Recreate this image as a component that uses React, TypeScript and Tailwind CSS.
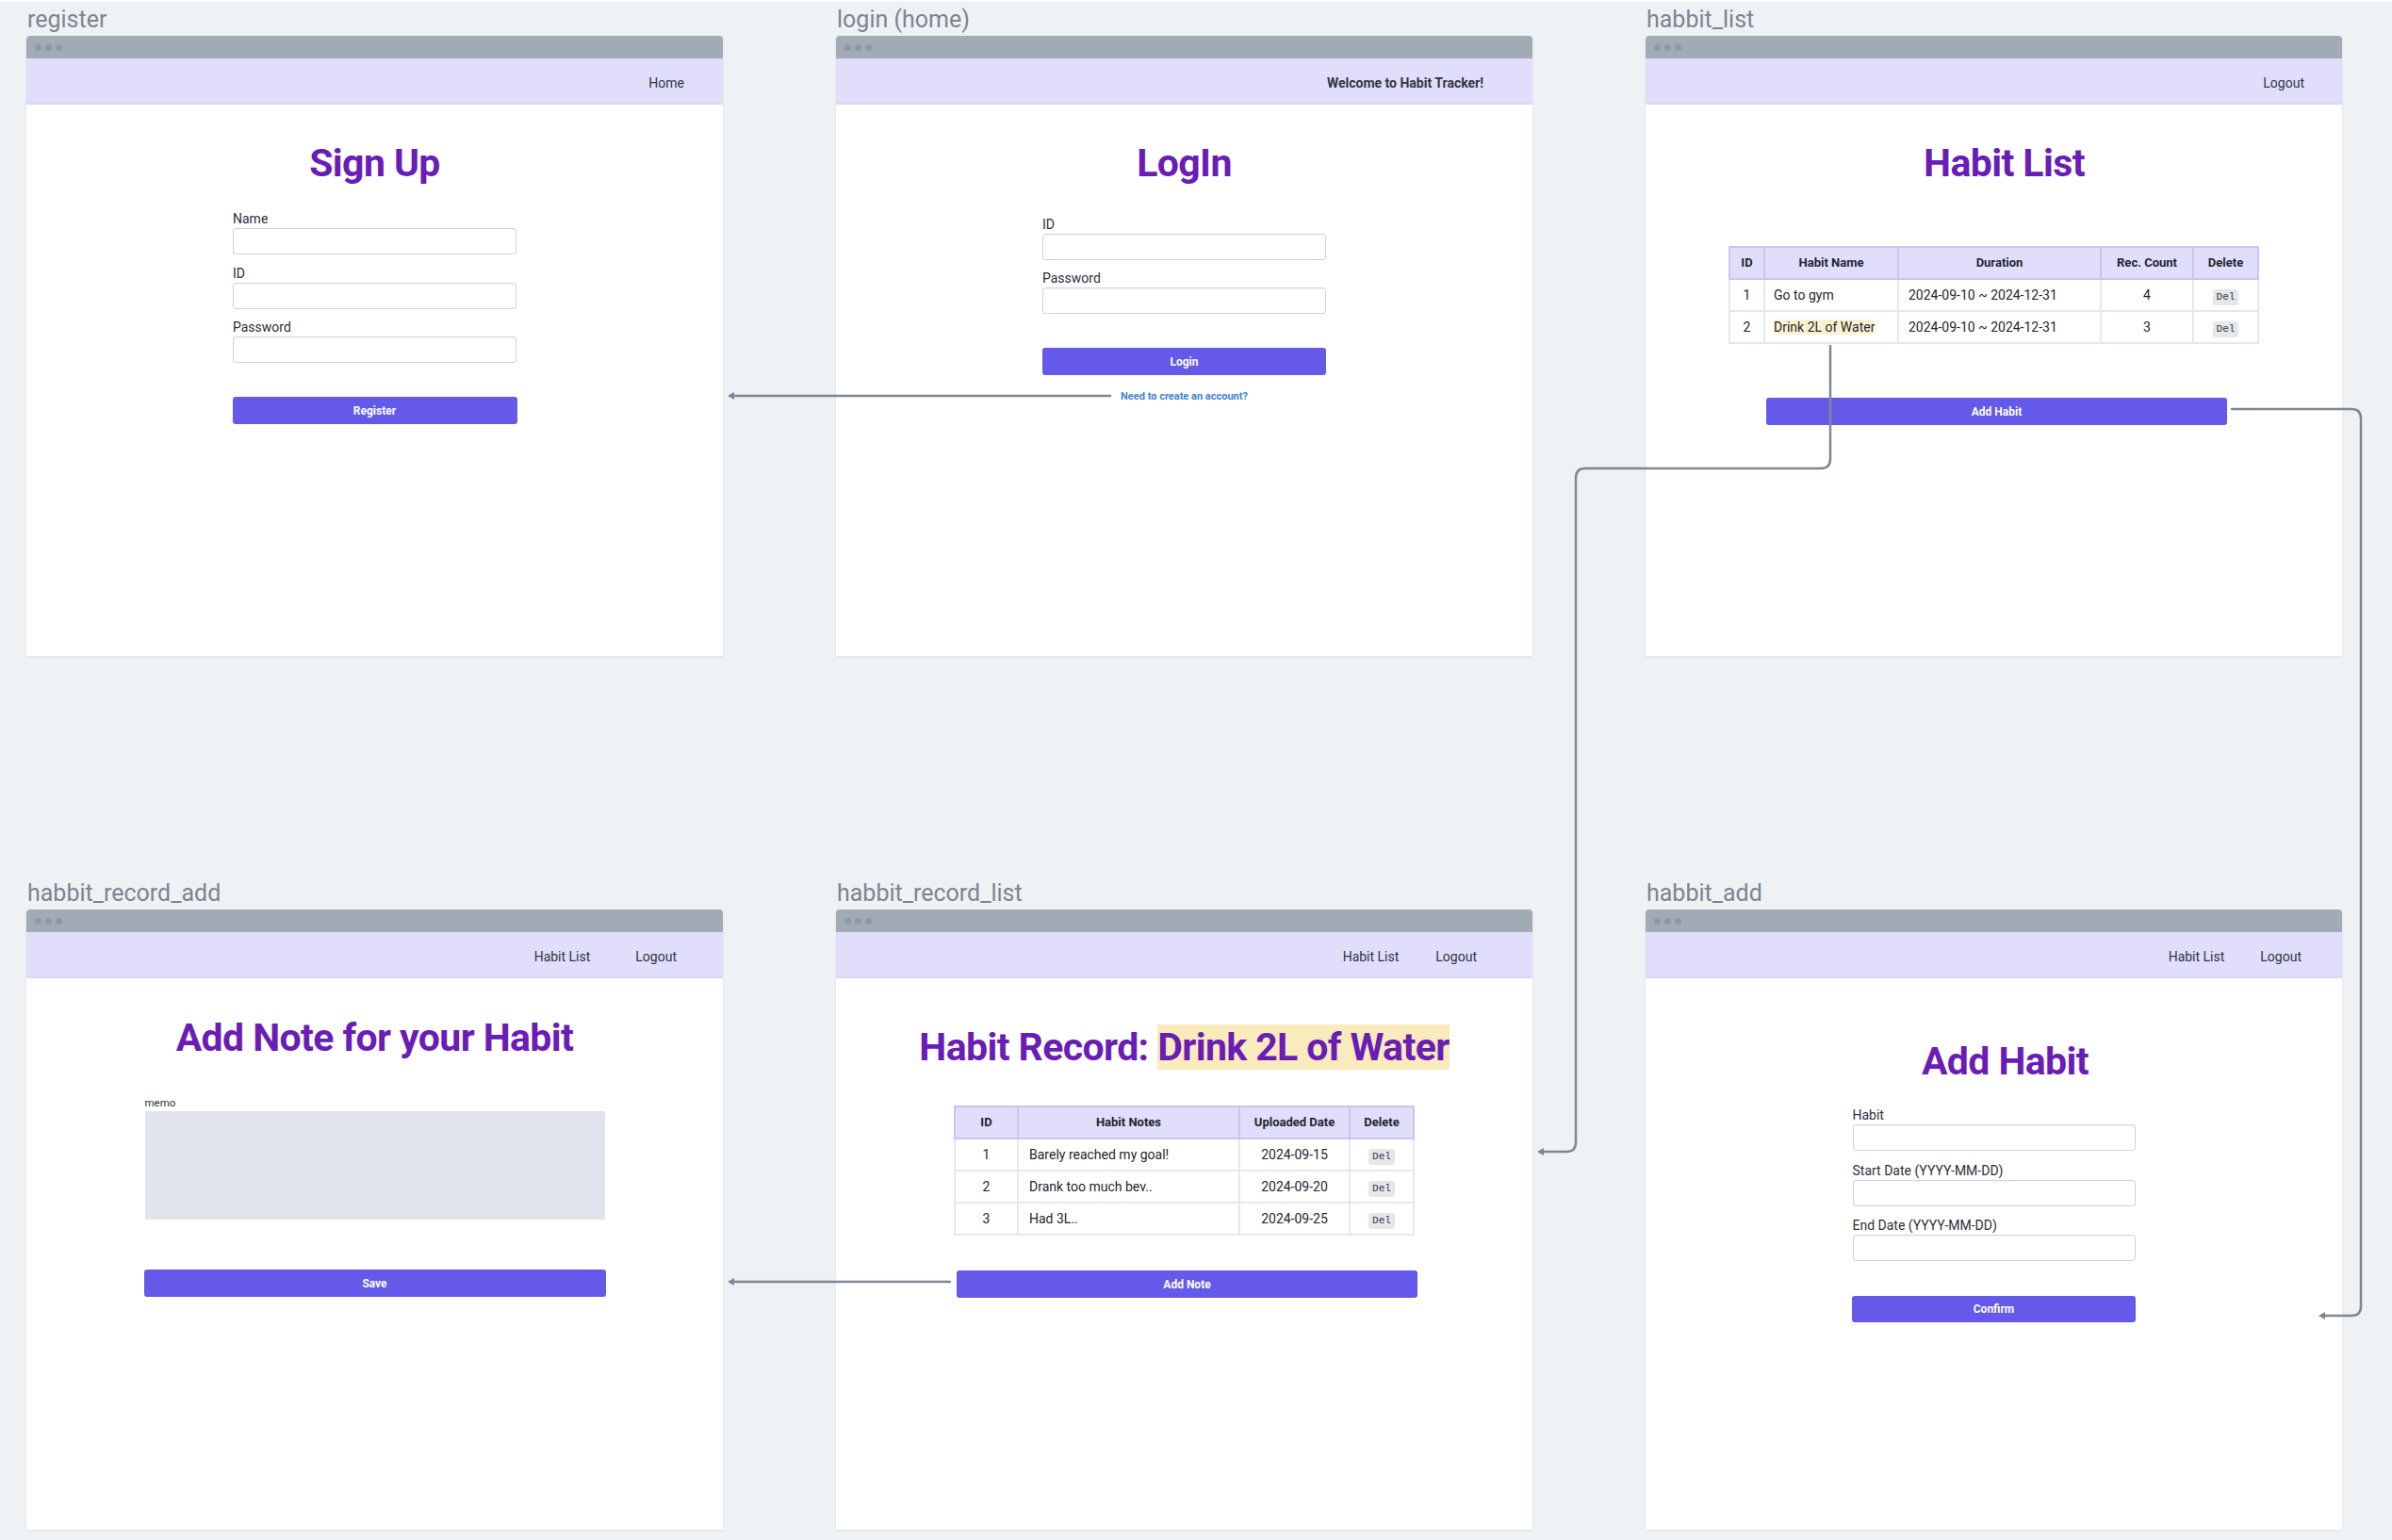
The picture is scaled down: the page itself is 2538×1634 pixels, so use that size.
import React from 'react';

type NavProps = { items: { label: string; bold?: boolean }[]; className: string };

const Nav: React.FC<NavProps> = ({ items, className }) => (
  <nav className={`h-[49px] pt-[6px] bg-[#e0defa] border-b-2 border-[#d8d7ee] flex items-center justify-end text-[14px] text-[#2f3542] ${className}`}>
    {items.map(item => (
      <span key={item.label} className={item.bold ? 'font-bold' : ''}>
        {item.label}
      </span>
    ))}
  </nav>
);

const Window: React.FC<{ label: string; nav: React.ReactNode; children: React.ReactNode }> = ({ label, nav, children }) => (
  <div>
    <div className="pl-px text-[25px] leading-[28px] text-[#7b8591] mb-[3px]">{label}</div>
    <div className="h-[658px] flex flex-col bg-white rounded-t-[4px] shadow-[0_1px_3px_rgba(30,41,59,0.08)] overflow-hidden">
      <div className="h-[24px] shrink-0 bg-[#a0abb5] flex items-center gap-[4px] pl-[9px]">
        <span className="w-[7px] h-[7px] rounded-full bg-[#8e99a4]" />
        <span className="w-[7px] h-[7px] rounded-full bg-[#8e99a4]" />
        <span className="w-[7px] h-[7px] rounded-full bg-[#8e99a4]" />
      </div>
      {nav}
      <div className="flex-1 flex flex-col items-center">{children}</div>
    </div>
  </div>
);

const Title: React.FC<{ className: string; children: React.ReactNode }> = ({ className, children }) => (
  <h1 className={`text-[41px] leading-[42px] tracking-[-0.6px] font-bold text-[#6a1db6] whitespace-nowrap ${className}`}>
    {children}
  </h1>
);

const Field: React.FC<{ label: string }> = ({ label }) => (
  <div className="flex flex-col">
    <label className="text-[14px] leading-[16px] text-[#2a2f3a] mb-[2px]">{label}</label>
    <div className="h-[28px] bg-white border-[1.5px] border-[#cfd3da] rounded-[3px] shadow-[inset_0_1px_1px_rgba(0,0,0,0.04)]" />
  </div>
);

const Button: React.FC<{ label: string; className: string }> = ({ label, className }) => (
  <button className={`bg-[#6459e8] rounded-[3px] text-white text-[12px] font-bold flex items-center justify-center ${className}`}>
    {label}
  </button>
);

const Del = () => (
  <span className="inline-block px-[4px] leading-[17px] rounded-[3px] bg-[#e5e7eb] text-[11px] text-[#2f3542] font-['Liberation_Mono',monospace]">
    Del
  </span>
);

const th = 'h-[34px] border-2 border-[#c9c5f1] bg-[#e0defa] font-bold text-[13px] text-center';
const td = 'h-[34px] border-2 border-[#e6e8ee]';

const habits = [
  { id: 1, name: 'Go to gym', duration: '2024-09-10 ~ 2024-12-31', count: 4, mark: false },
  { id: 2, name: 'Drink 2L of Water', duration: '2024-09-10 ~ 2024-12-31', count: 3, mark: true },
];

const notes = [
  { id: 1, note: 'Barely reached my goal!', date: '2024-09-15' },
  { id: 2, note: 'Drank too much bev..', date: '2024-09-20' },
  { id: 3, note: 'Had 3L..', date: '2024-09-25' },
];

const Connectors = () => (
  <svg className="absolute inset-0 pointer-events-none" width="2538" height="1634" viewBox="0 0 2538 1634" fill="none">
    <g stroke="#7d8895" strokeWidth="2.5" strokeLinecap="round">
      {/* login -> register */}
      <path d="M1178 420 H778" />
      {/* add note -> record add */}
      <path d="M1008 1360 H778" />
      {/* habit row -> record list */}
      <path d="M1942 367 V487 Q1942 497 1932 497 H1682 Q1672 497 1672 507 V1212 Q1672 1222 1662 1222 H1637" />
      {/* add habit -> habit add */}
      <path d="M2368 434 H2495 Q2505 434 2505 444 V1386 Q2505 1396 2495 1396 H2466" />
    </g>
    <g fill="#7d8895">
      <polygon points="772,420 779,416 779,424" />
      <polygon points="772,1360 779,1356 779,1364" />
      <polygon points="1631,1222 1638,1218 1638,1226" />
      <polygon points="2460,1396 2467,1392 2467,1400" />
    </g>
  </svg>
);

export default function App() {
  return (
    <div className="relative w-[2538px] h-[1634px] bg-[#eef2f5] overflow-hidden font-['Roboto',sans-serif]">
      <div className="h-[2px] bg-[#f8fafb]" />
      <div className="grid grid-cols-[739px_739px_739px] gap-x-[120px] gap-y-[238px] pl-[28px] pt-[5px]">
        {/* register */}
        <Window label="register" nav={<Nav items={[{ label: 'Home' }]} className="pr-[41px]" />}>
          <Title className="mt-[41px]">Sign Up</Title>
          <div className="mt-[30px] w-[301px] flex flex-col gap-[11.5px]">
            <Field label="Name" />
            <Field label="ID" />
            <Field label="Password" />
          </div>
          <Button label="Register" className="mt-[36px] w-[302px] h-[29px]" />
        </Window>

        {/* login */}
        <Window
          label="login (home)"
          nav={<Nav items={[{ label: 'Welcome to Habit Tracker!', bold: true }]} className="pr-[52px]" />}
        >
          <Title className="mt-[41px]">LogIn</Title>
          <div className="mt-[36px] w-[301px] flex flex-col gap-[11px]">
            <Field label="ID" />
            <Field label="Password" />
          </div>
          <Button label="Login" className="mt-[36px] w-[301px] h-[29px]" />
          <a className="mt-[17px] text-[11px] leading-[12px] font-bold text-[#3f7fd6]">Need to create an account?</a>
        </Window>

        {/* habbit_list */}
        <Window label="habbit_list" nav={<Nav items={[{ label: 'Logout' }]} className="pr-[40px]" />}>
          <Title className="mt-[41px] pl-[22px]">Habit List</Title>
          <table className="mt-[67px] w-[561px] table-fixed border-collapse text-[14px] text-[#1f2430]">
            <colgroup>
              <col className="w-[37px]" />
              <col className="w-[142px]" />
              <col className="w-[215px]" />
              <col className="w-[98px]" />
              <col className="w-[69px]" />
            </colgroup>
            <thead>
              <tr>
                <th className={th}>ID</th>
                <th className={th}>Habit Name</th>
                <th className={th}>Duration</th>
                <th className={th}>Rec. Count</th>
                <th className={th}>Delete</th>
              </tr>
            </thead>
            <tbody>
              {habits.map(h => (
                <tr key={h.id}>
                  <td className={`${td} text-center`}>{h.id}</td>
                  <td className={`${td} pl-[9px]`}>
                    <span className={h.mark ? 'bg-[#fcf1cf]' : ''}>{h.name}</span>
                  </td>
                  <td className={`${td} pl-[10px]`}>{h.duration}</td>
                  <td className={`${td} text-center`}>{h.count}</td>
                  <td className={`${td} text-center`}>
                    <Del />
                  </td>
                </tr>
              ))}
            </tbody>
          </table>
          <Button label="Add Habit" className="mt-[57px] ml-[6px] w-[489px] h-[29px]" />
        </Window>

        {/* habbit_record_add */}
        <Window
          label="habbit_record_add"
          nav={<Nav items={[{ label: 'Habit List' }, { label: 'Logout' }]} className="pr-[49px] gap-[48px]" />}
        >
          <Title className="mt-[42px]">Add Note for your Habit</Title>
          <div className="mt-[41px] w-[488px] flex flex-col">
            <label className="text-[11.5px] leading-[14px] text-[#2a2f3a] mb-[2px]">memo</label>
            <div className="h-[115px] bg-[#e1e4ec]" />
          </div>
          <Button label="Save" className="mt-[53px] w-[490px] h-[29px]" />
        </Window>

        {/* habbit_record_list */}
        <Window
          label="habbit_record_list"
          nav={<Nav items={[{ label: 'Habit List' }, { label: 'Logout' }]} className="pr-[59px] gap-[39px]" />}
        >
          <Title className="mt-[52px]">
            Habit Record: <span className="bg-[#f9ebbc]">Drink 2L of Water</span>
          </Title>
          <table className="mt-[41px] w-[487px] table-fixed border-collapse text-[14px] text-[#1f2430]">
            <colgroup>
              <col className="w-[67px]" />
              <col className="w-[235px]" />
              <col className="w-[117px]" />
              <col className="w-[68px]" />
            </colgroup>
            <thead>
              <tr>
                <th className={th}>ID</th>
                <th className={th}>Habit Notes</th>
                <th className={th}>Uploaded Date</th>
                <th className={th}>Delete</th>
              </tr>
            </thead>
            <tbody>
              {notes.map(n => (
                <tr key={n.id}>
                  <td className={`${td} text-center`}>{n.id}</td>
                  <td className={`${td} pl-[11px]`}>{n.note}</td>
                  <td className={`${td} text-center`}>{n.date}</td>
                  <td className={`${td} text-center`}>
                    <Del />
                  </td>
                </tr>
              ))}
            </tbody>
          </table>
          <Button label="Add Note" className="mt-[37px] ml-[6px] w-[489px] h-[29px]" />
        </Window>

        {/* habbit_add */}
        <Window
          label="habbit_add"
          nav={<Nav items={[{ label: 'Habit List' }, { label: 'Logout' }]} className="pr-[43px] gap-[38px]" />}
        >
          <Title className="mt-[67px] pl-[24px]">Add Habit</Title>
          <div className="mt-[28px] w-[300px] flex flex-col gap-[12.5px]">
            <Field label="Habit" />
            <Field label="Start Date (YYYY-MM-DD)" />
            <Field label="End Date (YYYY-MM-DD)" />
          </div>
          <Button label="Confirm" className="mt-[37px] w-[301px] h-[28px]" />
        </Window>
      </div>
      <Connectors />
    </div>
  );
}
